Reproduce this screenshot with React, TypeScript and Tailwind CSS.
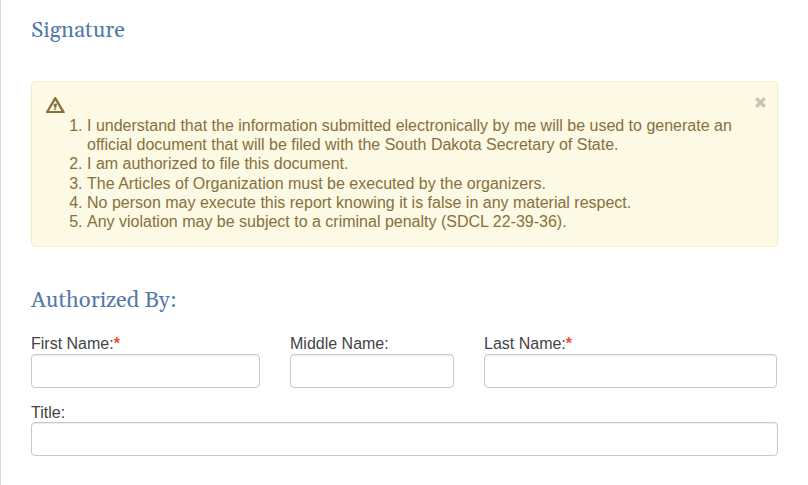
import React from 'react';

const terms = [
  'I understand that the information submitted electronically by me will be used to generate an official document that will be filed with the South Dakota Secretary of State.',
  'I am authorized to file this document.',
  'The Articles of Organization must be executed by the organizers.',
  'No person may execute this report knowing it is false in any material respect.',
  'Any violation may be subject to a criminal penalty (SDCL 22-39-36).',
];

type FieldProps = {
  id: string;
  label: string;
  required?: boolean;
  className?: string;
};

const Field: React.FC<FieldProps> = ({ id, label, required, className }) => {
  return (
    <div className={className}>
      <label htmlFor={id} className="block leading-5">
        {label}
        {required && <span className="font-bold text-[#fa4a2c]">*</span>}
      </label>
      <input
        id={id}
        type="text"
        className="block w-full h-[34px] rounded-[4px] border border-[#c8c8c8] bg-white px-3 shadow-[inset_0_1px_1px_rgba(0,0,0,0.075)] outline-none"
      />
    </div>
  );
};

const Heading: React.FC<{ children: React.ReactNode }> = ({ children }) => (
  <h2 className="font-[Georgia,Gelasio,'Liberation_Serif',serif] text-[22px] leading-6 text-[#5379ab]">
    {children}
  </h2>
);

const App: React.FC = () => {
  return (
    <div className="h-[485px] border-l border-[#dcdcdc] bg-white pl-[30px] pr-[30px] pt-[19px] font-['Liberation_Sans',Arial,sans-serif] text-base text-[#444]">
      <Heading>Signature</Heading>

      {/* Terms alert */}
      <div className="relative mt-[38px] h-[166px] rounded-[4px] border border-[#f6ecc8] bg-[#fcf9e4] pl-[14px] pr-[35px] pt-[15px] text-[#87703d]">
        <button type="button" aria-label="Close" className="absolute right-[11px] top-[10px] text-[#c9c6b5]">
          <svg width="12" height="20" viewBox="0 0 12 20" stroke="currentColor" strokeWidth="3.4">
            <path d="M2.3 6.3l8.4 8.4M10.7 6.3l-8.4 8.4" />
          </svg>
        </button>
        {/* Warning sign */}
        <svg className="mb-px" width="20" height="18" viewBox="0 0 20 18">
          <path
            fill="currentColor"
            fillRule="evenodd"
            d="M8.6 0h1.3l8.8 14.8V16H0v-1.2zM9.2 3.4L3 13.9h12.4z"
          />
          <path fill="currentColor" d="M7.4 6.8h3.7l-.9 4H8.2zM8.2 11.5h2v1.5h-2z" />
        </svg>
        <ol className="list-decimal pl-[41px] leading-[19.2px]">
          {terms.map((term) => (
            <li key={term}>{term}</li>
          ))}
        </ol>
      </div>

      <div className="mt-[42px]">
        <Heading>Authorized By:</Heading>
      </div>

      {/* Signer fields */}
      <form className="mt-[21px]">
        <div className="flex gap-[30px]">
          <Field id="first" label="First Name:" required className="w-[229px]" />
          <Field id="middle" label="Middle Name:" className="w-[164px]" />
          <Field id="last" label="Last Name:" required className="w-[293px]" />
        </div>
        <Field id="title" label="Title:" className="mt-[15px] [&>label]:h-[19px]" />
      </form>
    </div>
  );
};

export default App;
